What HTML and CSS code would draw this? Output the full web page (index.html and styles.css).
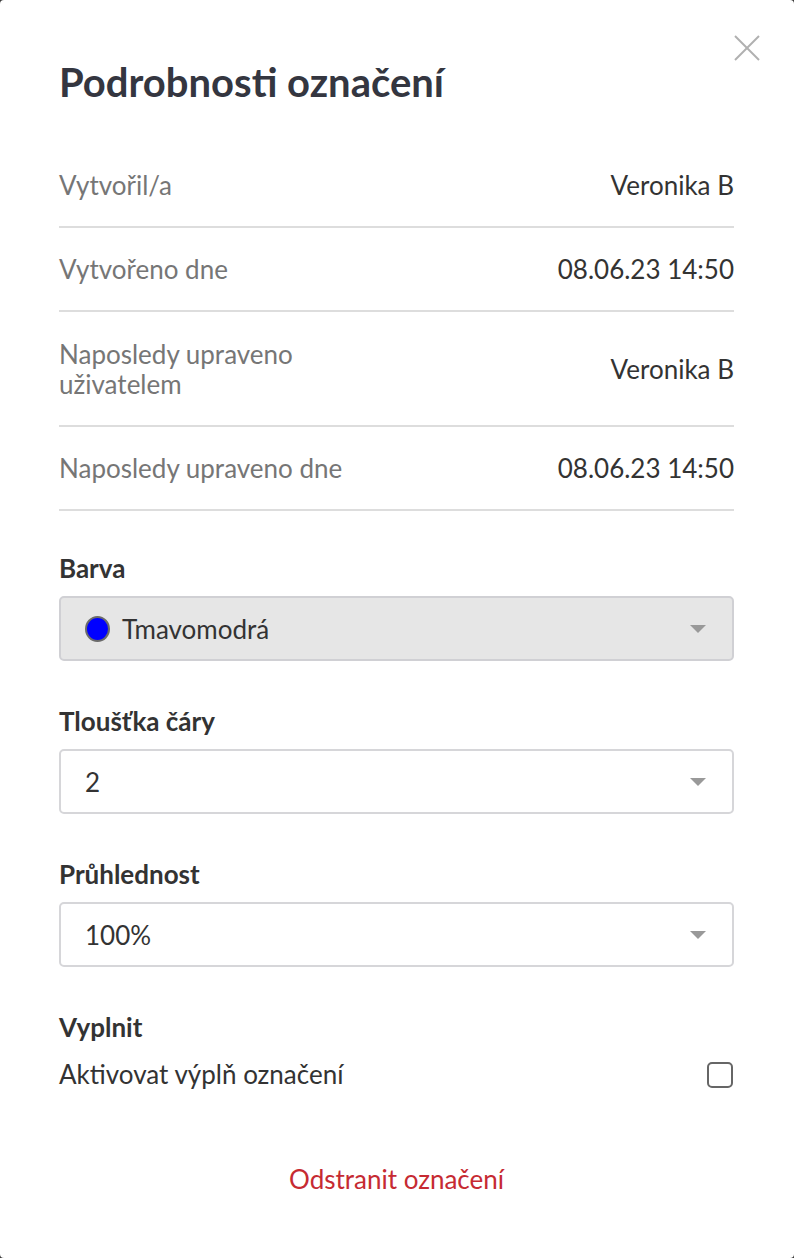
FILE: index.html
```html
<!DOCTYPE html>
<html lang="cs">
<head>
    <meta charset="UTF-8">
    <meta name="viewport" content="width=device-width, initial-scale=1.0">
    <title>Podrobnosti označení</title>
    <link rel="stylesheet" href="styles.css">
</head>
<body>
    <div class="modal">
        <button class="close-button" aria-label="Zavřít">
            <svg width="26" height="26" viewBox="0 0 26 26" fill="none" stroke="currentColor" stroke-width="2">
                <line x1="1" y1="1" x2="25" y2="25"/>
                <line x1="25" y1="1" x2="1" y2="25"/>
            </svg>
        </button>

        <h1 class="modal-title">Podrobnosti označení</h1>

        <div class="details">
            <div class="detail-row">
                <div class="detail-label">Vytvořil/a</div>
                <div class="detail-value">Veronika B</div>
            </div>
            <div class="detail-row">
                <div class="detail-label">Vytvořeno dne</div>
                <div class="detail-value">08.06.23 14:50</div>
            </div>
            <div class="detail-row">
                <div class="detail-label two-line">Naposledy upraveno<br>uživatelem</div>
                <div class="detail-value">Veronika B</div>
            </div>
            <div class="detail-row">
                <div class="detail-label">Naposledy upraveno dne</div>
                <div class="detail-value">08.06.23 14:50</div>
            </div>
        </div>

        <div class="field">
            <div class="field-label">Barva</div>
            <div class="select select-disabled">
                <span class="color-dot"></span>
                <span class="select-text">Tmavomodrá</span>
                <span class="select-arrow"></span>
            </div>
        </div>

        <div class="field">
            <div class="field-label">Tloušťka čáry</div>
            <div class="select">
                <span class="select-text">2</span>
                <span class="select-arrow"></span>
            </div>
        </div>

        <div class="field">
            <div class="field-label">Průhlednost</div>
            <div class="select">
                <span class="select-text">100%</span>
                <span class="select-arrow"></span>
            </div>
        </div>

        <div class="field fill-field">
            <div class="field-label">Vyplnit</div>
            <label class="checkbox-row">
                <span>Aktivovat výplň označení</span>
                <span class="checkbox"></span>
            </label>
        </div>

        <button class="delete-button">Odstranit označení</button>
    </div>
</body>
</html>
```

FILE: styles.css
```css
* {
    margin: 0;
    padding: 0;
    box-sizing: border-box;
    font-family: Lato, 'Open Sans', sans-serif;
}

html {
    background: #3a3a3a;
}

body {
    min-height: 100vh;
}

.modal {
    position: relative;
    min-height: 1258px;
    background: #ffffff;
    border-radius: 4px;
    padding: 60px 60px 0 59px;
    color: #333333;
}

.close-button {
    position: absolute;
    top: 35px;
    right: 34px;
    background: none;
    border: none;
    color: #b0b0b0;
    cursor: pointer;
    display: flex;
}

.modal-title {
    font-size: 40px;
    font-weight: 700;
    line-height: 44px;
    color: #343640;
    margin-bottom: 40px;
}

.detail-row {
    display: flex;
    justify-content: space-between;
    align-items: center;
    padding: 27px 0 26px;
    border-bottom: 2px solid #dddddd;
    font-size: 26px;
    line-height: 29px;
}

.detail-label {
    color: #767676;
}

.detail-label.two-line {
    line-height: 30px;
}

.detail-value {
    color: #333333;
}

.field {
    display: flex;
    flex-direction: column;
    gap: 13px;
    margin-top: 46px;
}

.details + .field {
    margin-top: 43px;
}

.field-label {
    font-size: 26px;
    font-weight: 700;
    line-height: 29px;
    color: #333333;
}

.select {
    display: flex;
    align-items: center;
    gap: 12px;
    height: 65px;
    padding: 0 26px 0 24px;
    border: 2px solid #d6d6d9;
    border-radius: 5px;
    background: #ffffff;
    font-size: 26px;
    color: #333333;
}

.select-disabled {
    background: #e6e6e6;
    border-color: #d0d0d4;
}

.color-dot {
    width: 25px;
    height: 26px;
    border-radius: 50%;
    background: #0000ff;
    border: 2px solid #6b6b6b;
}

.select-text {
    flex: 1;
}

.select-arrow {
    width: 0;
    height: 0;
    border-left: 8px solid transparent;
    border-right: 8px solid transparent;
    border-top: 8px solid #999999;
}

.fill-field {
    gap: 18px;
}

.checkbox-row {
    display: flex;
    justify-content: space-between;
    align-items: center;
    font-size: 26px;
    line-height: 29px;
    color: #333333;
}

.checkbox {
    width: 26px;
    height: 26px;
    border: 2px solid #666666;
    border-radius: 5px;
    margin-right: 1px;
}

.delete-button {
    display: block;
    margin: 76px auto 0;
    background: none;
    border: none;
    font-size: 26px;
    line-height: 29px;
    color: #c62a32;
    cursor: pointer;
}
```
